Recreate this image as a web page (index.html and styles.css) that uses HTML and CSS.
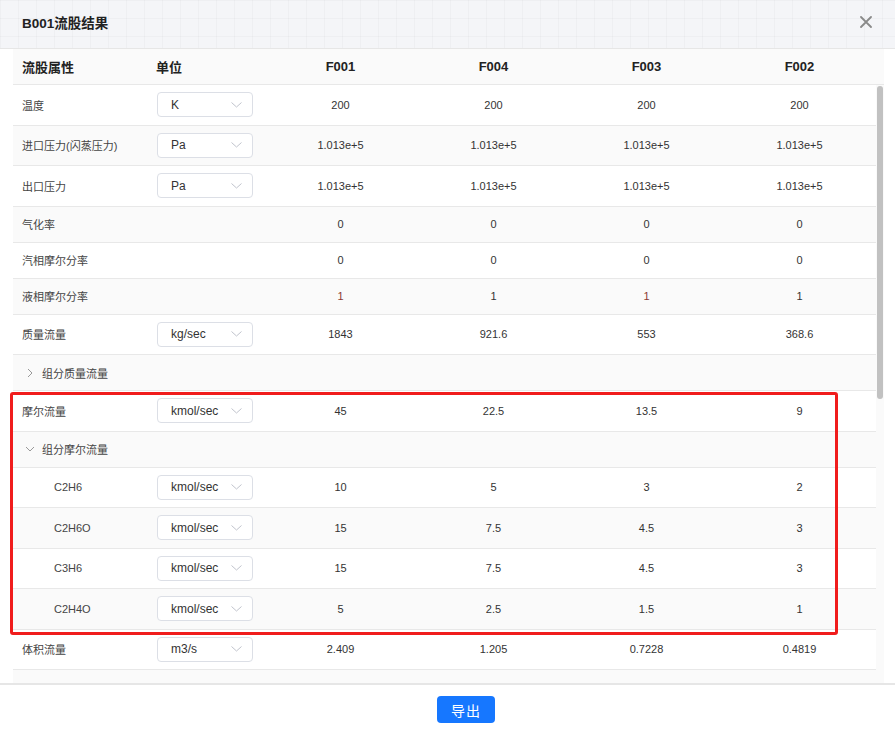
FILE: index.html
```html
<!DOCTYPE html>
<html lang="zh-CN">
<head>
<meta charset="utf-8">
<title>B001流股结果</title>
<link rel="stylesheet" href="styles.css">
</head>
<body>
<div class="dialog">
  <div class="dlg-head">
    <span class="title">B001流股结果</span>
    <span class="close" aria-label="关闭">
      <svg width="12" height="12" viewBox="0 0 12 12"><path d="M1 1L11 11M11 1L1 11" stroke="#8a8a8a" stroke-width="1.8" fill="none" stroke-linecap="round"/></svg>
    </span>
  </div>
  <div class="dlg-body">
    <div class="grid thead">
      <div class="c label">流股属性</div>
      <div class="c unit">单位</div>
      <div class="c val">F001</div>
      <div class="c val">F004</div>
      <div class="c val">F003</div>
      <div class="c val">F002</div>
    </div>
    <div class="scroller">
      <div class="rows">
        <div class="grid row tall">
          <div class="c label">温度</div>
          <div class="c unit"><span class="select">K<svg class="arr" width="11" height="6" viewBox="0 0 11 6"><polyline points="0.5,0.5 5.5,5 10.5,0.5" fill="none" stroke="#c0c4cc" stroke-width="1"/></svg></span></div>
          <div class="c val">200</div><div class="c val">200</div><div class="c val">200</div><div class="c val">200</div>
        </div>
        <div class="grid row tall alt">
          <div class="c label">进口压力(闪蒸压力)</div>
          <div class="c unit"><span class="select">Pa<svg class="arr" width="11" height="6" viewBox="0 0 11 6"><polyline points="0.5,0.5 5.5,5 10.5,0.5" fill="none" stroke="#c0c4cc" stroke-width="1"/></svg></span></div>
          <div class="c val">1.013e+5</div><div class="c val">1.013e+5</div><div class="c val">1.013e+5</div><div class="c val">1.013e+5</div>
        </div>
        <div class="grid row tall">
          <div class="c label">出口压力</div>
          <div class="c unit"><span class="select">Pa<svg class="arr" width="11" height="6" viewBox="0 0 11 6"><polyline points="0.5,0.5 5.5,5 10.5,0.5" fill="none" stroke="#c0c4cc" stroke-width="1"/></svg></span></div>
          <div class="c val">1.013e+5</div><div class="c val">1.013e+5</div><div class="c val">1.013e+5</div><div class="c val">1.013e+5</div>
        </div>
        <div class="grid row alt">
          <div class="c label">气化率</div>
          <div class="c unit"></div>
          <div class="c val">0</div><div class="c val">0</div><div class="c val">0</div><div class="c val">0</div>
        </div>
        <div class="grid row">
          <div class="c label">汽相摩尔分率</div>
          <div class="c unit"></div>
          <div class="c val">0</div><div class="c val">0</div><div class="c val">0</div><div class="c val">0</div>
        </div>
        <div class="grid row alt">
          <div class="c label">液相摩尔分率</div>
          <div class="c unit"></div>
          <div class="c val red">1</div><div class="c val">1</div><div class="c val red">1</div><div class="c val">1</div>
        </div>
        <div class="grid row tall">
          <div class="c label">质量流量</div>
          <div class="c unit"><span class="select">kg/sec<svg class="arr" width="11" height="6" viewBox="0 0 11 6"><polyline points="0.5,0.5 5.5,5 10.5,0.5" fill="none" stroke="#c0c4cc" stroke-width="1"/></svg></span></div>
          <div class="c val">1843</div><div class="c val">921.6</div><div class="c val">553</div><div class="c val">368.6</div>
        </div>
        <div class="grid row alt group">
          <div class="c label span2"><svg class="tog" width="10" height="10" viewBox="0 0 10 10"><polyline points="3,1 7,5 3,9" fill="none" stroke="#999" stroke-width="1"/></svg>组分质量流量</div>
          <div class="c val"></div><div class="c val"></div><div class="c val"></div><div class="c val"></div>
        </div>
        <div class="grid row tall">
          <div class="c label">摩尔流量</div>
          <div class="c unit"><span class="select">kmol/sec<svg class="arr" width="11" height="6" viewBox="0 0 11 6"><polyline points="0.5,0.5 5.5,5 10.5,0.5" fill="none" stroke="#c0c4cc" stroke-width="1"/></svg></span></div>
          <div class="c val">45</div><div class="c val">22.5</div><div class="c val">13.5</div><div class="c val">9</div>
        </div>
        <div class="grid row alt group">
          <div class="c label span2"><svg class="tog" width="10" height="10" viewBox="0 0 10 10"><polyline points="1,3 5,7 9,3" fill="none" stroke="#999" stroke-width="1"/></svg>组分摩尔流量</div>
          <div class="c val"></div><div class="c val"></div><div class="c val"></div><div class="c val"></div>
        </div>
        <div class="grid row tall">
          <div class="c label sub">C2H6</div>
          <div class="c unit"><span class="select">kmol/sec<svg class="arr" width="11" height="6" viewBox="0 0 11 6"><polyline points="0.5,0.5 5.5,5 10.5,0.5" fill="none" stroke="#c0c4cc" stroke-width="1"/></svg></span></div>
          <div class="c val">10</div><div class="c val">5</div><div class="c val">3</div><div class="c val">2</div>
        </div>
        <div class="grid row tall alt">
          <div class="c label sub">C2H6O</div>
          <div class="c unit"><span class="select">kmol/sec<svg class="arr" width="11" height="6" viewBox="0 0 11 6"><polyline points="0.5,0.5 5.5,5 10.5,0.5" fill="none" stroke="#c0c4cc" stroke-width="1"/></svg></span></div>
          <div class="c val">15</div><div class="c val">7.5</div><div class="c val">4.5</div><div class="c val">3</div>
        </div>
        <div class="grid row tall">
          <div class="c label sub">C3H6</div>
          <div class="c unit"><span class="select">kmol/sec<svg class="arr" width="11" height="6" viewBox="0 0 11 6"><polyline points="0.5,0.5 5.5,5 10.5,0.5" fill="none" stroke="#c0c4cc" stroke-width="1"/></svg></span></div>
          <div class="c val">15</div><div class="c val">7.5</div><div class="c val">4.5</div><div class="c val">3</div>
        </div>
        <div class="grid row tall alt">
          <div class="c label sub">C2H4O</div>
          <div class="c unit"><span class="select">kmol/sec<svg class="arr" width="11" height="6" viewBox="0 0 11 6"><polyline points="0.5,0.5 5.5,5 10.5,0.5" fill="none" stroke="#c0c4cc" stroke-width="1"/></svg></span></div>
          <div class="c val">5</div><div class="c val">2.5</div><div class="c val">1.5</div><div class="c val">1</div>
        </div>
        <div class="grid row tall">
          <div class="c label">体积流量</div>
          <div class="c unit"><span class="select">m3/s<svg class="arr" width="11" height="6" viewBox="0 0 11 6"><polyline points="0.5,0.5 5.5,5 10.5,0.5" fill="none" stroke="#c0c4cc" stroke-width="1"/></svg></span></div>
          <div class="c val">2.409</div><div class="c val">1.205</div><div class="c val">0.7228</div><div class="c val">0.4819</div>
        </div>
        <div class="grid row alt">
          <div class="c label"></div>
          <div class="c unit"></div>
          <div class="c val"></div><div class="c val"></div><div class="c val"></div><div class="c val"></div>
        </div>
      </div>
      <div class="scrollbar"><div class="thumb"></div></div>
    </div>
  </div>
  <div class="dlg-foot">
    <button class="btn-primary">导出</button>
  </div>
  <div class="highlight"></div>
</div>
</body>
</html>
```
FILE: styles.css
```css
* { box-sizing: border-box; }
html, body { margin: 0; padding: 0; background: #fff; }
body {
  font-family: "Liberation Sans", Arial, "Noto Sans CJK SC", sans-serif;
  color: #333;
  font-size: 11px;
}
.dialog {
  position: relative;
  width: 895px;
  height: 734px;
  overflow: hidden;
  background: #fff;
}
.dlg-head {
  height: 49px;
  display: flex;
  align-items: center;
  justify-content: space-between;
  padding: 0 22px 4px 22px;
  background-color: #f4f5f8;
  background-image:
    linear-gradient(to right, rgba(0,0,0,0.022) 1px, transparent 1px),
    linear-gradient(to bottom, rgba(0,0,0,0.022) 1px, transparent 1px);
  background-size: 18px 18px;
  border-bottom: 1px solid #e6e6e6;
}
.title {
  font-size: 13.5px;
  font-weight: bold;
  color: #222;
}
.close {
  display: flex;
  width: 12px;
  height: 12px;
  margin-right: 1px;
}
.dlg-body {
  padding-left: 13px;
  height: 634px;
}
.grid {
  display: grid;
  grid-template-columns: 132px 119px 153px 153px 153px 153px;
}
.thead {
  width: 871px;
  height: 36px;
  background: #fafafa;
  border-bottom: 1px solid #e8e8e8;
  font-size: 13px;
  font-weight: bold;
  color: #222;
}
.c {
  display: flex;
  align-items: center;
  min-width: 0;
  white-space: nowrap;
}
.label { padding-left: 9px; color: #444; }
.thead .label, .thead .unit { color: #222; }
.unit { padding-left: 12px; }
.thead .unit { padding-left: 11px; }
.val { justify-content: center; }
.val.red { color: #8a3b35; }
.scroller {
  position: relative;
  width: 871px;
  height: 598px;
  overflow: hidden;
  padding-right: 8px;
}
.rows { width: 863px; }
.row {
  height: 36px;
  border-bottom: 1px solid #e8e8e8;
  background: #fff;
}
.row.tall { height: 40.5px; }
.row.alt { background: #fafafa; }
.label.sub { padding-left: 41px; }
.span2 { grid-column: span 2; padding-left: 12px; }
.tog { margin-right: 7px; flex: none; }
.select {
  display: flex;
  align-items: center;
  justify-content: space-between;
  width: 96px;
  height: 25px;
  padding: 0 10px 0 13px;
  border: 1px solid #dcdfe6;
  border-radius: 4px;
  background: #fff;
  color: #333;
  font-size: 12px;
}
.arr { flex: none; }
.scrollbar {
  position: absolute;
  top: 0;
  right: 0;
  width: 8px;
  height: 598px;
  background: #fafafa;
}
.thumb {
  margin: 1px 0 0 1px;
  width: 6px;
  height: 313px;
  border-radius: 3px;
  background: #c1c1c1;
}
.dlg-foot {
  border-top: 2px solid #e6e6e6;
  height: 51px;
  padding: 11px 0 0 437px;
}
.btn-primary {
  width: 58px;
  height: 27px;
  border: none;
  border-radius: 4px;
  background: #1677ff;
  color: #fff;
  font-family: "Noto Sans CJK SC", "Liberation Sans", sans-serif;
  font-size: 14px;
  letter-spacing: 1px;
  padding: 0;
}
.highlight {
  position: absolute;
  left: 10px;
  top: 392px;
  width: 828px;
  height: 243px;
  border: 3px solid #f01c1c;
  border-radius: 3px;
  pointer-events: none;
}
```
